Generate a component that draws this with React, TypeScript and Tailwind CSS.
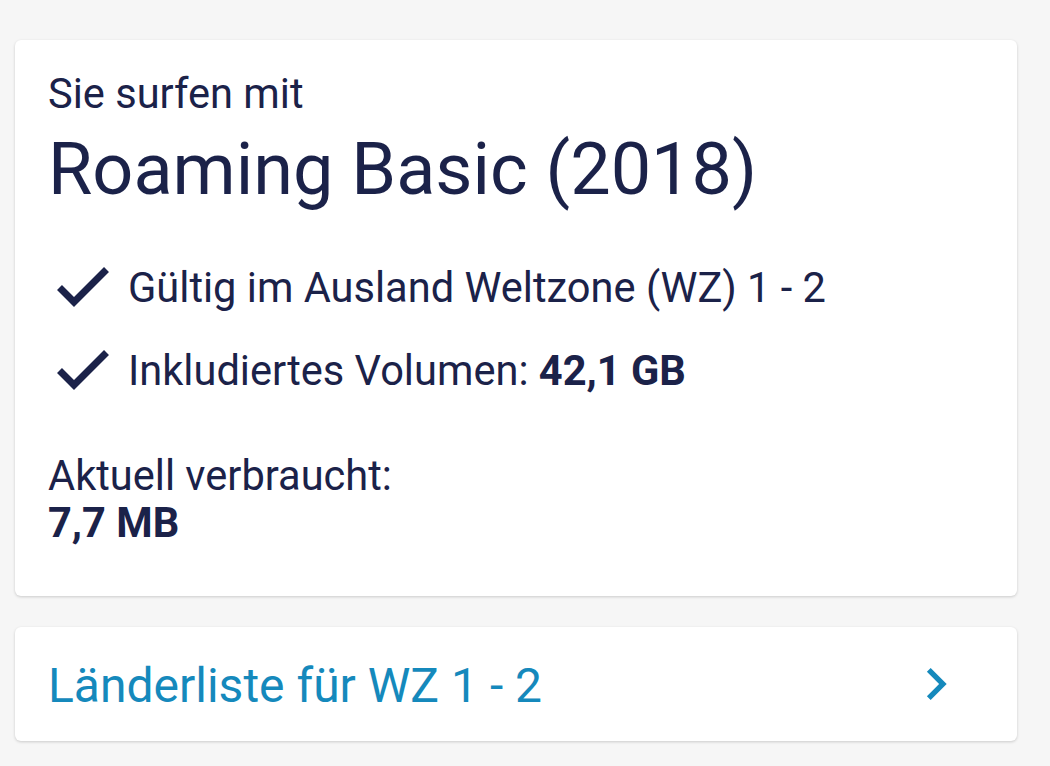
import { ReactNode } from 'react'

function CheckIcon() {
  return (
    <svg viewBox="0 0 72 72" className="h-[72px] w-[72px] shrink-0">
      <polyline
        points="12.5,39.5 27,54 59.5,21.5"
        fill="none"
        stroke="#1b2249"
        strokeWidth={7}
        strokeLinejoin="miter"
        strokeLinecap="butt"
      />
    </svg>
  )
}

function ChevronRight() {
  return (
    <svg viewBox="0 0 24 24" className="h-[64px] w-[64px] shrink-0 fill-[#1589bc]">
      <path d="M10 6L8.59 7.41 13.17 12l-4.58 4.59L10 18l6-6z" />
    </svg>
  )
}

function Feature({ children }: { children: ReactNode }) {
  return (
    <div className="flex items-start">
      <CheckIcon />
      <div className="ml-[9px] mt-[16px] text-[41.6px] leading-[48px]">{children}</div>
    </div>
  )
}

export default function App() {
  return (
    <div
      className="min-h-[766px] w-[1050px] bg-[#f6f6f6] pt-[40px] text-[#1b2249]"
      style={{ fontFamily: 'Roboto, "Noto Sans", sans-serif' }}
    >
      {/* Plan card */}
      <div className="ml-[15px] w-[1002px] rounded-[6px] bg-white pb-[50px] pl-[33px] pr-8 pt-[30px] shadow-[0_1px_3px_rgba(0,0,0,0.18)]">
        <div className="text-[41.6px] leading-[48px]">Sie surfen mit</div>
        <h1 className="mt-[12px] text-[72px] leading-[80px]">Roaming Basic (2018)</h1>

        <div className="-ml-[1px] mt-[38px] flex flex-col gap-[11px]">
          <Feature>Gültig im Ausland Weltzone (WZ) 1 - 2</Feature>
          <Feature>
            Inkludiertes Volumen: <span className="font-bold">42,1 GB</span>
          </Feature>
        </div>

        <div className="mt-[49px] text-[41.6px] leading-[47px]">Aktuell verbraucht:</div>
        <div className="text-[41.6px] font-bold leading-[47px]">7,7 MB</div>
      </div>

      {/* Country list link */}
      <div className="ml-[15px] mt-[31px] flex h-[114px] w-[1002px] items-center justify-between rounded-[6px] bg-white pl-[33px] pr-[49px] shadow-[0_1px_3px_rgba(0,0,0,0.18)]">
        <span className="pt-[4px] text-[48px] leading-[60px] text-[#1589bc]">Länderliste für WZ 1 - 2</span>
        <ChevronRight />
      </div>
    </div>
  )
}
